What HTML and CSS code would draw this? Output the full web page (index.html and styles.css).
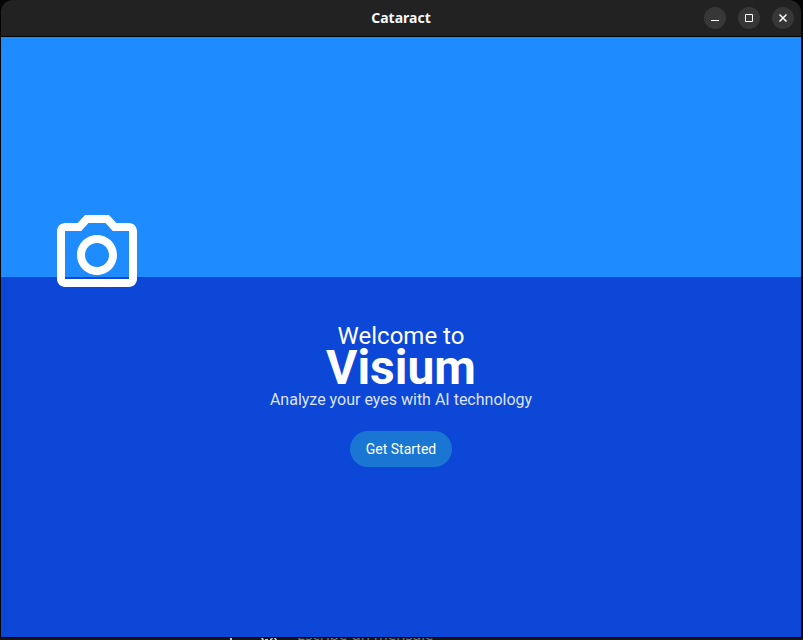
FILE: index.html
```html
<!DOCTYPE html>
<html lang="en">
<head>
<meta charset="utf-8">
<title>Cataract</title>
<link rel="stylesheet" href="styles.css">
</head>
<body>
<div class="window">
  <header class="titlebar">
    <h1 class="window-title">Cataract</h1>
    <div class="controls">
      <button class="control" type="button" aria-label="Minimize"><svg viewBox="0 0 22 22"><path d="M7 13.5h8"/></svg></button>
      <button class="control" type="button" aria-label="Maximize"><svg viewBox="0 0 22 22"><path d="M7.5 7.5h7v7h-7z"/></svg></button>
      <button class="control" type="button" aria-label="Close"><svg viewBox="0 0 22 22"><path d="M7.5 7.5l7 7M14.5 7.5l-7 7" stroke-width="1.5"/></svg></button>
    </div>
  </header>
  <main class="content">
    <section class="hero">
      <svg class="camera" viewBox="0 0 24 24" aria-hidden="true"><path d="M14.12 4l1.83 2H20v12H4V6h4.05l1.83-2h4.24M15 2H9L7.17 4H4c-1.1 0-2 .9-2 2v12c0 1.1.9 2 2 2h16c1.1 0 2-.9 2-2V6c0-1.1-.9-2-2-2h-3.17L15 2zm-3 7c1.65 0 3 1.35 3 3s-1.35 3-3 3-3-1.35-3-3 1.35-3 3-3m0-2c-2.76 0-5 2.24-5 5s2.24 5 5 5 5-2.24 5-5-2.24-5-5-5z"/></svg>
    </section>
    <section class="welcome">
      <p class="greeting">Welcome to</p>
      <h2 class="brand">Visium</h2>
      <p class="tagline">Analyze your eyes with AI technology</p>
      <button class="start" type="button">Get Started</button>
    </section>
  </main>
</div>
<div class="backdrop">
  <svg class="tools" viewBox="0 0 54 2" aria-hidden="true"><path d="M4 0h2v2H4zM35 0h2l1 2h-2zM39 1h3v1h-3zM44 1l2-1h1l-1 2h-2zM48 0h2l1 2h-2z"/></svg>
  <span>Escribe un mensaje</span>
</div>
</body>
</html>
```
FILE: styles.css
```css
* { box-sizing: border-box; }
body {
  margin: 0;
  height: 100vh;
  display: flex;
  flex-direction: column;
  background: #050505;
  font-family: Roboto, sans-serif;
  overflow: hidden;
}
h1, h2, p { margin: 0; }
.window {
  flex: 1;
  min-height: 0;
  margin: 0 2px 0 1px;
  display: flex;
  flex-direction: column;
  border-radius: 12px 12px 0 0;
  overflow: hidden;
}
.titlebar {
  flex: none;
  height: 37px;
  padding: 0 7px;
  display: grid;
  grid-template-columns: 1fr auto 1fr;
  align-items: center;
  background: #222;
  border-bottom: 1px solid #000;
}
.window-title {
  grid-column: 2;
  color: #f7f7f7;
  font: bold 14px/20px "Noto Sans", sans-serif;
}
.controls {
  display: flex;
  justify-content: flex-end;
  gap: 12px;
}
.control {
  width: 22px;
  height: 22px;
  padding: 0;
  border: 0;
  border-radius: 50%;
  background: #373737;
}
.control svg {
  display: block;
  width: 22px;
  height: 22px;
  fill: none;
  stroke: #fff;
}
.content {
  flex: 1;
  display: grid;
  grid-template-rows: 2fr 3fr;
}
.hero {
  padding-left: 48px;
  display: flex;
  align-items: flex-end;
  background: #1e8bfe;
}
.camera {
  position: relative;
  width: 96px;
  height: 96px;
  margin-bottom: -26px;
  fill: #fff;
}
.welcome {
  padding-top: 45px;
  display: flex;
  flex-direction: column;
  align-items: center;
  background: #0d47d7;
  color: #fff;
}
.greeting { font-size: 24px; line-height: 28px; }
.brand { font-size: 48px; line-height: 36px; }
.tagline { font-size: 16px; line-height: 28px; color: #dbe3f9; }
.start {
  height: 36px;
  margin-top: 17px;
  padding: 0 16px;
  border: 0;
  border-radius: 18px;
  background: #1976d2;
  color: #fff;
  font: 14px/20px Roboto, sans-serif;
}
.backdrop {
  flex: none;
  height: 3px;
  padding-left: 226px;
  display: flex;
  align-items: flex-end;
  gap: 17px;
  overflow: hidden;
  border-top: 1px solid #000;
  background: #141414;
  color: #777;
  font: 15px/18px "Noto Sans", sans-serif;
}
.tools {
  width: 54px;
  height: 2px;
  fill: #ccc;
}
.backdrop span { margin-bottom: -3px; }
```
